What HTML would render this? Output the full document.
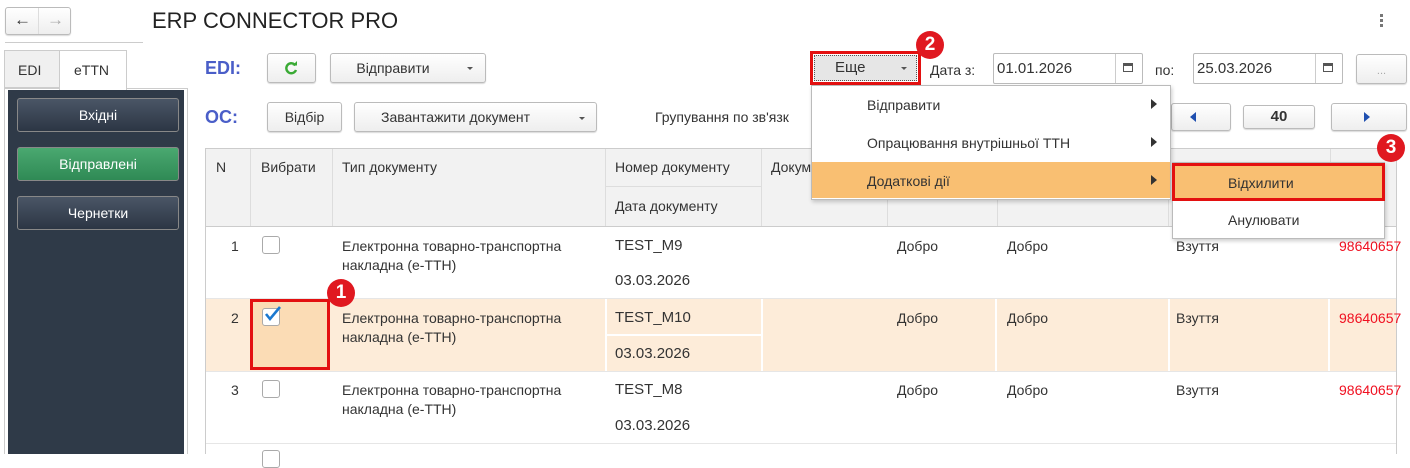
<!DOCTYPE html>
<html><head><meta charset="utf-8"><style>
*{box-sizing:border-box;margin:0;padding:0}
body{width:1410px;height:454px;background:#fff;position:relative;overflow:hidden;font-family:"Liberation Sans",Arial,sans-serif;font-size:14px;color:#333}
.a{position:absolute}
.btn{position:absolute;border:1px solid #bbb;border-radius:3px;background:linear-gradient(#fff,#eee);box-shadow:0 1px 1px rgba(0,0,0,.15);text-align:center;color:#333;font-size:14px}
.sb{position:absolute;left:17px;width:162px;height:34px;border:1px solid #888;border-radius:3px;color:#fff;text-align:center;line-height:32px;font-size:14px;background:linear-gradient(#4a5666,#2c3644)}
.t{position:absolute;font-size:14px;color:#333;white-space:nowrap;line-height:18px}
.red{color:#f01020}
.badge{position:absolute;width:28px;height:28px;border-radius:50%;background:#e01820;color:#fff;font-weight:bold;font-size:19px;text-align:center;line-height:28px}
.cb{position:absolute;width:18px;height:18px;border:1px solid #aaa;border-radius:3px;background:#fff}
.vl{position:absolute;width:1px;background:#ddd}
.hl{position:absolute;height:1px;background:#ddd}
.arr{position:absolute;width:0;height:0;border-top:5px solid transparent;border-bottom:5px solid transparent;border-left:6px solid #333}
</style></head><body>
<!-- nav -->
<div class="btn" style="left:5px;top:7px;width:66px;height:28px"></div>
<div class="a" style="left:38px;top:8px;width:1px;height:26px;background:#ddd"></div>
<div class="t" style="left:14px;top:11px;font-size:17px;font-weight:bold;color:#333">&larr;</div>
<div class="t" style="left:47px;top:11px;font-size:17px;font-weight:bold;color:#aaa">&rarr;</div>
<div class="t" style="left:152px;top:8px;font-size:22px;line-height:26px;color:#222">ERP CONNECTOR PRO</div>
<div class="a" style="left:1380px;top:14px;width:3px;height:3px;background:#777;box-shadow:0 5px 0 #777,0 10px 0 #777"></div>
<div class="a" style="left:5px;top:42px;width:138px;height:1px;background:#ccc"></div>

<!-- tabs / sidebar -->
<div class="a" style="left:4px;top:88px;width:184px;height:366px;border:1px solid #ccc;border-bottom:none"></div>
<div class="a" style="left:8px;top:90px;width:176px;height:364px;background:#2f3a48"></div>
<div class="a" style="left:4px;top:50px;width:56px;height:38px;border:1px solid #ccc;background:#f0f0f0"></div>
<div class="t" style="left:18px;top:61px">EDI</div>
<div class="a" style="left:59px;top:50px;width:68px;height:40px;border:1px solid #ccc;border-bottom:none;background:#fff"></div>
<div class="t" style="left:74px;top:61px">eTTN</div>
<div class="sb" style="top:98px">Вхідні</div>
<div class="sb" style="top:147px;background:linear-gradient(#4aa870,#2f8a55)">Відправлені</div>
<div class="sb" style="top:196px">Чернетки</div>

<!-- toolbar -->
<div class="t" style="left:205px;top:57px;font-size:18px;font-weight:bold;color:#4a5ec8;line-height:22px">EDI:</div>
<div class="btn" style="left:267px;top:53px;width:49px;height:30px"></div>
<svg class="a" style="left:283px;top:60px" width="16" height="16" viewBox="0 0 16 16"><path d="M12.5 5.5A5 5 0 1 0 13 10" fill="none" stroke="#3aaa35" stroke-width="2.4"/><path d="M9.5 5.5h4.5V1z" fill="#3aaa35"/></svg>
<div class="btn" style="left:330px;top:53px;width:156px;height:30px;line-height:28px;padding-right:30px">Відправити</div>
<div class="a" style="left:467px;top:67px;border-left:3px solid transparent;border-right:3px solid transparent;border-top:3px solid #555"></div>

<div class="t" style="left:205px;top:106px;font-size:18px;font-weight:bold;color:#4a5ec8;line-height:22px">ОС:</div>
<div class="btn" style="left:267px;top:102px;width:75px;height:30px;line-height:28px">Відбір</div>
<div class="btn" style="left:354px;top:102px;width:243px;height:30px;line-height:28px;padding-right:40px">Завантажити документ</div>
<div class="a" style="left:579px;top:117px;border-left:3px solid transparent;border-right:3px solid transparent;border-top:3px solid #555"></div>
<div class="t" style="left:655px;top:108px">Групування по зв'язк</div>

<!-- Еще and dates -->
<div class="a" style="left:810px;top:51px;width:111px;height:34px;border:3px solid #e31010"></div>
<div class="a" style="left:814px;top:55px;width:103px;height:26px;border:1px dotted #555;background:#e6e6e6"></div>
<div class="t" style="left:835px;top:59px;font-size:15px">Еще</div>
<div class="a" style="left:901px;top:67px;border-left:3px solid transparent;border-right:3px solid transparent;border-top:3px solid #555"></div>
<div class="badge" style="left:916px;top:31px">2</div>
<div class="t" style="left:930px;top:61px">Дата з:</div>
<div class="a" style="left:993px;top:53px;width:150px;height:31px;border:1px solid #bbb;border-radius:2px"></div>
<div class="a" style="left:1115px;top:54px;width:1px;height:29px;background:#ccc"></div>
<div class="t" style="left:997px;top:60px;font-size:15px">01.01.2026</div>
<div class="a" style="left:1123px;top:63px;width:10px;height:9px;border:1.5px solid #555;border-top-width:3px"></div>
<div class="t" style="left:1155px;top:61px">по:</div>
<div class="a" style="left:1193px;top:53px;width:150px;height:31px;border:1px solid #bbb;border-radius:2px"></div>
<div class="a" style="left:1315px;top:54px;width:1px;height:29px;background:#ccc"></div>
<div class="t" style="left:1197px;top:60px;font-size:15px">25.03.2026</div>
<div class="a" style="left:1323px;top:63px;width:10px;height:9px;border:1.5px solid #555;border-top-width:3px"></div>
<div class="btn" style="left:1356px;top:54px;width:51px;height:30px;line-height:32px;color:#aaa;font-size:11px">...</div>

<!-- pagination -->
<div class="btn" style="left:1171px;top:103px;width:60px;height:28px"></div>
<div class="a" style="left:1190px;top:112px;border-top:5px solid transparent;border-bottom:5px solid transparent;border-right:6px solid #2050b0"></div>
<div class="btn" style="left:1243px;top:105px;width:72px;height:24px;line-height:22px;font-weight:bold;font-size:15px">40</div>
<div class="btn" style="left:1331px;top:103px;width:76px;height:28px"></div>
<div class="a" style="left:1364px;top:112px;border-top:5px solid transparent;border-bottom:5px solid transparent;border-left:6px solid #2050b0"></div>

<!-- table -->
<div class="a" style="left:205px;top:148px;width:1192px;height:306px;border:1px solid #ccc;border-bottom:none"></div>
<div class="a" style="left:206px;top:149px;width:1190px;height:77px;background:#f2f2f2"></div>
<div class="hl" style="left:605px;top:186px;width:156px;background:#ddd"></div>
<div class="hl" style="left:206px;top:226px;width:1190px;background:#ccc"></div>
<div class="vl" style="left:250px;top:149px;height:77px"></div>
<div class="vl" style="left:332px;top:149px;height:77px"></div>
<div class="vl" style="left:605px;top:149px;height:77px"></div>
<div class="vl" style="left:761px;top:149px;height:77px"></div>
<div class="vl" style="left:887px;top:149px;height:77px"></div>
<div class="vl" style="left:997px;top:149px;height:77px"></div>
<div class="vl" style="left:1168px;top:149px;height:77px"></div>
<div class="vl" style="left:1330px;top:149px;height:77px"></div>
<div class="t" style="left:216px;top:158px">N</div>
<div class="t" style="left:261px;top:158px">Вибрати</div>
<div class="t" style="left:342px;top:158px">Тип документу</div>
<div class="t" style="left:615px;top:158px">Номер документу</div>
<div class="t" style="left:615px;top:197px">Дата документу</div>
<div class="t" style="left:771px;top:158px">Докум</div>

<!-- rows -->
<div class="hl" style="left:206px;top:298px;width:1190px;background:#e6e6e6"></div>
<div class="a" style="left:206px;top:299px;width:1190px;height:72px;background:#fdecd9"></div>
<div class="hl" style="left:206px;top:371px;width:1190px;background:#e6e6e6"></div>
<div class="hl" style="left:206px;top:443px;width:1190px;background:#e6e6e6"></div>
<div class="a" style="left:605px;top:299px;width:2px;height:72px;background:#fff"></div>
<div class="a" style="left:761px;top:299px;width:2px;height:72px;background:#fff"></div>
<div class="a" style="left:606px;top:334px;width:156px;height:2px;background:#fff"></div>
<div class="a" style="left:995px;top:299px;width:2px;height:72px;background:#fff"></div>
<div class="a" style="left:1168px;top:299px;width:2px;height:72px;background:#fff"></div>
<div class="a" style="left:1328px;top:299px;width:2px;height:72px;background:#fff"></div>

<!-- row 1 -->
<div class="t" style="left:231px;top:237px">1</div>
<div class="cb" style="left:262px;top:236px"></div>
<div class="t" style="left:342px;top:237px">Електронна товарно-транспортна</div>
<div class="t" style="left:342px;top:256px">накладна (е-ТТН)</div>
<div class="t" style="left:615px;top:237px;font-size:15px">TEST_M9</div>
<div class="t" style="left:615px;top:272px;font-size:15px">03.03.2026</div>
<div class="t" style="left:897px;top:237px">Добро</div>
<div class="t" style="left:1007px;top:237px">Добро</div>
<div class="t" style="left:1176px;top:237px">Взуття</div>
<div class="t red" style="left:1339px;top:237px">98640657</div>

<!-- row 2 -->
<div class="a" style="left:250px;top:299px;width:80px;height:71px;background:#fbdcb5;border:3px solid #e31010"></div>
<div class="t" style="left:231px;top:309px">2</div>
<div class="cb" style="left:262px;top:308px"></div>
<svg class="a" style="left:263px;top:305px" width="20" height="18" viewBox="0 0 20 18"><path d="M3 9l4 5 10-12" fill="none" stroke="#1a78d0" stroke-width="2.6"/></svg>
<div class="badge" style="left:327px;top:279px">1</div>
<div class="t" style="left:342px;top:309px">Електронна товарно-транспортна</div>
<div class="t" style="left:342px;top:328px">накладна (е-ТТН)</div>
<div class="t" style="left:615px;top:309px;font-size:15px">TEST_M10</div>
<div class="t" style="left:615px;top:345px;font-size:15px">03.03.2026</div>
<div class="t" style="left:897px;top:309px">Добро</div>
<div class="t" style="left:1007px;top:309px">Добро</div>
<div class="t" style="left:1176px;top:309px">Взуття</div>
<div class="t red" style="left:1339px;top:309px">98640657</div>

<!-- row 3 -->
<div class="t" style="left:231px;top:381px">3</div>
<div class="cb" style="left:262px;top:380px"></div>
<div class="t" style="left:342px;top:381px">Електронна товарно-транспортна</div>
<div class="t" style="left:342px;top:400px">накладна (е-ТТН)</div>
<div class="t" style="left:615px;top:381px;font-size:15px">TEST_M8</div>
<div class="t" style="left:615px;top:417px;font-size:15px">03.03.2026</div>
<div class="t" style="left:897px;top:381px">Добро</div>
<div class="t" style="left:1007px;top:381px">Добро</div>
<div class="t" style="left:1176px;top:381px">Взуття</div>
<div class="t red" style="left:1339px;top:381px">98640657</div>
<div class="cb" style="left:262px;top:450px"></div>

<!-- menu -->
<div class="a" style="left:811px;top:85px;width:360px;height:115px;background:#fff;border:1px solid #bbb;box-shadow:1px 2px 4px rgba(0,0,0,.2)"></div>
<div class="t" style="left:867px;top:96px">Відправити</div>
<div class="arr" style="left:1151px;top:99px"></div>
<div class="t" style="left:867px;top:134px">Опрацювання внутрішньої ТТН</div>
<div class="arr" style="left:1151px;top:137px"></div>
<div class="a" style="left:812px;top:162px;width:358px;height:36px;background:#f9bf72"></div>
<div class="t" style="left:867px;top:172px">Додаткові дії</div>
<div class="arr" style="left:1151px;top:175px"></div>

<!-- submenu -->
<div class="a" style="left:1172px;top:162px;width:213px;height:77px;background:#fff;border:1px solid #bbb;box-shadow:1px 2px 4px rgba(0,0,0,.2)"></div>
<div class="a" style="left:1172px;top:163px;width:213px;height:38px;background:#f9bf72;border:3px solid #e31010"></div>
<div class="t" style="left:1228px;top:174px">Відхилити</div>
<div class="t" style="left:1228px;top:211px">Анулювати</div>
<div class="badge" style="left:1377px;top:134px">3</div>
</body></html>
